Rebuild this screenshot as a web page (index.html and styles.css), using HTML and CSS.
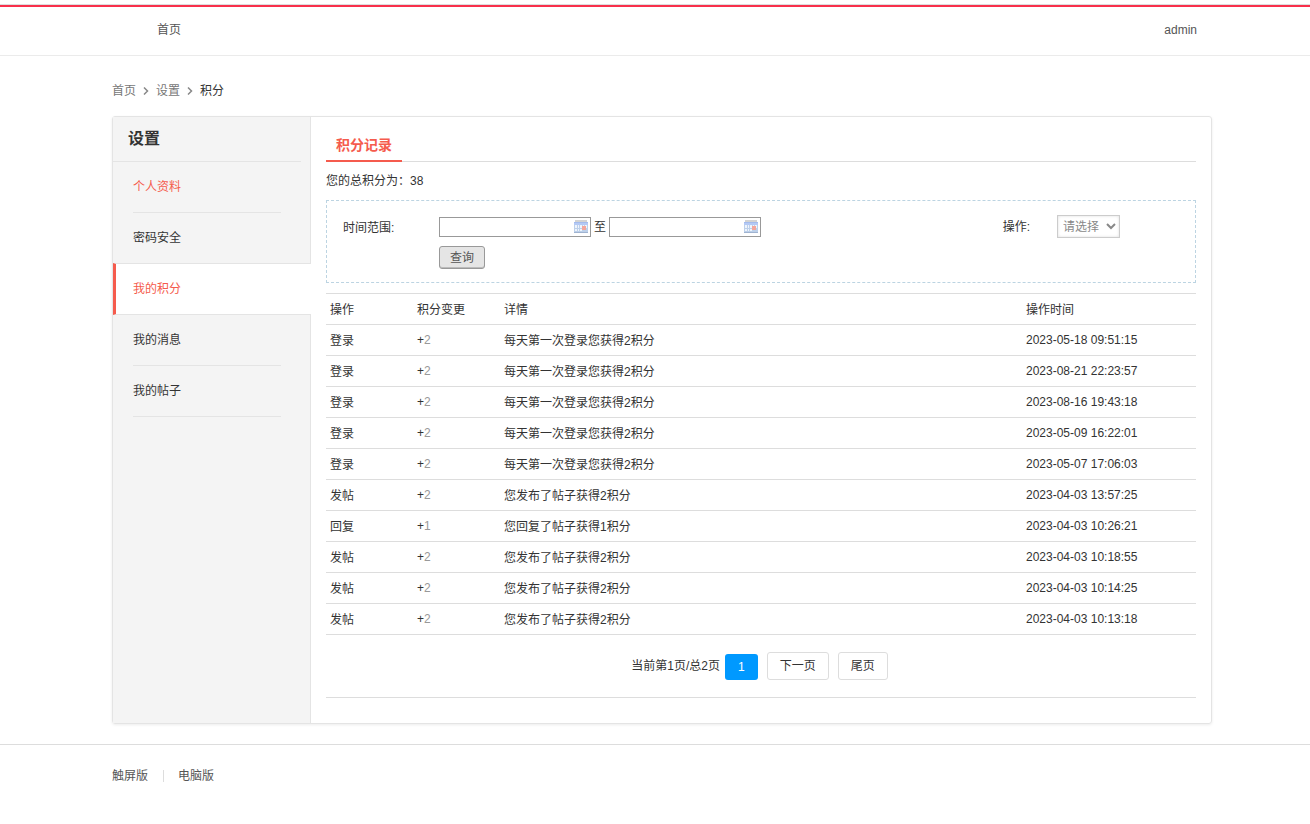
FILE: index.html
```html
<!DOCTYPE html>
<html lang="zh-CN">
<head>
  <meta charset="UTF-8">
  <meta name="viewport" content="width=device-width, initial-scale=1.0">
  <title>积分</title>
  <link rel="stylesheet" href="styles.css">
</head>
<body>
  <header class="header">
    <nav class="header-inner">
      <a href="#">首页</a>
      <a href="#">admin</a>
    </nav>
  </header>

  <div class="wrap">
    <nav class="crumbs">
      <a href="#">首页</a>
      <svg width="6" height="8" viewBox="0 0 6 8"><path d="M1 .5L4.5 4L1 7.5" /></svg>
      <a href="#">设置</a>
      <svg width="6" height="8" viewBox="0 0 6 8"><path d="M1 .5L4.5 4L1 7.5" /></svg>
      <span>积分</span>
    </nav>

    <div class="panel">
      <aside class="sidebar">
        <h1>设置</h1>
        <ul class="menu">
          <li><a href="#" class="visited">个人资料</a></li>
          <li><a href="#">密码安全</a></li>
          <li class="active"><a href="#">我的积分</a></li>
          <li><a href="#">我的消息</a></li>
          <li><a href="#">我的帖子</a></li>
        </ul>
      </aside>

      <main class="content">
        <div class="tabs">
          <h2>积分记录</h2>
        </div>
        <p class="total">您的总积分为：38</p>

        <form class="search">
          <label class="range-label" for="start">时间范围:</label>
          <div class="range">
            <div class="range-row">
              <span class="date-box">
                <input type="text" id="start">
                <svg width="14" height="14" viewBox="0 0 14 14">
                  <path fill="#d3d3d3" d="M1 0h12v2H1z" />
                  <path fill="#a3bbed" d="M0 2h14v1H0z" />
                  <path fill="#b4c9f4" d="M0 3h14v2H0z" />
                  <path fill="#bdd0ea" d="M0 5h14v8H0z" />
                  <path fill="#eef4fc" d="M1 5h2v3H1zM4 5h1v3H4zM6 5h2v3H6zM9 5h1v3H9zM11 5h2v3h-2zM1 9h2v2H1zM4 9h1v2H4zM6 9h2v2H6z" />
                  <path fill="#f3a69b" d="M8 6h4v4H8z" />
                  <path fill="#9fb3d0" d="M0 12h14v1H0z" />
                </svg>
              </span>
              <label for="end">至</label>
              <span class="date-box">
                <input type="text" id="end">
                <svg width="14" height="14" viewBox="0 0 14 14">
                  <path fill="#d3d3d3" d="M1 0h12v2H1z" />
                  <path fill="#a3bbed" d="M0 2h14v1H0z" />
                  <path fill="#b4c9f4" d="M0 3h14v2H0z" />
                  <path fill="#bdd0ea" d="M0 5h14v8H0z" />
                  <path fill="#eef4fc" d="M1 5h2v3H1zM4 5h1v3H4zM6 5h2v3H6zM9 5h1v3H9zM11 5h2v3h-2zM1 9h2v2H1zM4 9h1v2H4zM6 9h2v2H6z" />
                  <path fill="#f3a69b" d="M8 6h4v4H8z" />
                  <path fill="#9fb3d0" d="M0 12h14v1H0z" />
                </svg>
              </span>
            </div>
            <button type="submit" class="search-button">查询</button>
          </div>
          <div class="action">
            <label for="action">操作:</label>
            <select id="action">
              <option>请选择</option>
            </select>
          </div>
        </form>

        <table class="records">
          <thead>
            <tr><th class="narrow">操作</th><th class="narrow">积分变更</th><th class="wide">详情</th><th>操作时间</th></tr>
          </thead>
          <tbody>
            <tr><td>登录</td><td>+<span>2</span></td><td>每天第一次登录您获得2积分</td><td>2023-05-18 09:51:15</td></tr>
            <tr><td>登录</td><td>+<span>2</span></td><td>每天第一次登录您获得2积分</td><td>2023-08-21 22:23:57</td></tr>
            <tr><td>登录</td><td>+<span>2</span></td><td>每天第一次登录您获得2积分</td><td>2023-08-16 19:43:18</td></tr>
            <tr><td>登录</td><td>+<span>2</span></td><td>每天第一次登录您获得2积分</td><td>2023-05-09 16:22:01</td></tr>
            <tr><td>登录</td><td>+<span>2</span></td><td>每天第一次登录您获得2积分</td><td>2023-05-07 17:06:03</td></tr>
            <tr><td>发帖</td><td>+<span>2</span></td><td>您发布了帖子获得2积分</td><td>2023-04-03 13:57:25</td></tr>
            <tr><td>回复</td><td>+<span>1</span></td><td>您回复了帖子获得1积分</td><td>2023-04-03 10:26:21</td></tr>
            <tr><td>发帖</td><td>+<span>2</span></td><td>您发布了帖子获得2积分</td><td>2023-04-03 10:18:55</td></tr>
            <tr><td>发帖</td><td>+<span>2</span></td><td>您发布了帖子获得2积分</td><td>2023-04-03 10:14:25</td></tr>
            <tr><td>发帖</td><td>+<span>2</span></td><td>您发布了帖子获得2积分</td><td>2023-04-03 10:13:18</td></tr>
          </tbody>
        </table>

        <nav class="pages">
          <span class="page-info">当前第1页/总2页</span>
          <a href="#" class="current">1</a>
          <a href="#">下一页</a>
          <a href="#">尾页</a>
        </nav>
      </main>
    </div>
  </div>

  <footer class="footer">
    <a href="#">触屏版</a>
    <a href="#">电脑版</a>
  </footer>
</body>
</html>
```
FILE: styles.css
```css
* {
  box-sizing: border-box;
}

body {
  margin: 0;
  background: #fff;
  color: #333;
  font-family: "Liberation Sans", "Noto Sans CJK SC", sans-serif;
  font-size: 12px;
  line-height: 20px;
}

a {
  color: inherit;
  text-decoration: none;
}

h1, h2, p, ul {
  margin: 0;
  padding: 0;
}

input, select, button {
  font: inherit;
}

/* header */
.header {
  margin-top: 4px;
  border-top: 1px solid #ddd;
  border-bottom: 1px solid #ebebeb;
}

.header-inner {
  display: flex;
  justify-content: space-between;
  padding: 13px 113px 15px 157px;
  border-top: 2px solid #f8304b;
  color: #555;
}

.wrap {
  padding: 0 98px 0 112px;
}

.crumbs {
  display: flex;
  align-items: center;
  gap: 7px;
  padding: 25px 0 15px;
  color: #777;
}

.crumbs span {
  color: #333;
}

.crumbs svg {
  fill: none;
  stroke: #888;
  stroke-width: 1.5;
}

/* panel */
.panel {
  display: flex;
  border: 1px solid #e4e4e4;
  border-radius: 3px;
  box-shadow: 0 1px 3px rgba(0, 0, 0, 0.08);
}

.sidebar {
  width: 198px;
  flex-shrink: 0;
  background: #f4f4f4;
  box-shadow: inset -1px 0 #e4e4e4;
}

.sidebar h1 {
  margin-right: 10px;
  padding: 10px 15px;
  border-bottom: 1px solid #e4e4e4;
  font-size: 16px;
  line-height: 24px;
}

.menu {
  list-style: none;
}

.menu a {
  display: block;
  margin: 0 30px 0 20px;
  padding: 15px 0;
  border-bottom: 1px solid #e4e4e4;
}

.menu .visited,
.menu .active a {
  color: #f55b4d;
}

.menu .active {
  margin-top: -1px;
  border-top: 1px solid #e4e4e4;
  border-bottom: 1px solid #e4e4e4;
  border-left: 3px solid #f55b4d;
  background: #fff;
}

.menu .active a {
  margin-left: 17px;
  border-bottom: 0;
}

.content {
  flex: 1;
  padding: 14px 15px 25px;
}

.tabs {
  display: flex;
  border-bottom: 1px solid #ddd;
}

.tabs h2 {
  margin-bottom: -1px;
  padding: 4px 10px 5px;
  border-bottom: 2px solid #f55b4d;
  color: #f55b4d;
  font-size: 14px;
}

.total {
  padding: 9px 0;
}

/* search form */
.search {
  display: flex;
  align-items: flex-start;
  padding: 14px 75px 13px 16px;
  border: 1px dashed #bcd4e2;
}

.range-label {
  width: 96px;
  padding-top: 3px;
}

.range-row {
  display: flex;
  align-items: center;
  gap: 3px;
  padding: 2px 0;
}

.date-box {
  display: flex;
  align-items: center;
  width: 152px;
  height: 20px;
  padding-right: 2px;
  border: 1px solid #999;
}

.date-box input {
  flex: 1;
  min-width: 0;
  height: 18px;
  border: 0;
  outline: none;
}

.search-button {
  height: 23px;
  margin-top: 7px;
  padding: 0 10px;
  border: 1px solid #999;
  border-radius: 3px;
  background: #e5e5e5;
  box-shadow: inset 0 -1px #bbb;
  color: #555;
}

.action {
  display: flex;
  align-items: center;
  gap: 27px;
  margin-left: auto;
}

.action select {
  width: 63px;
  height: 23px;
  padding: 0 1px;
  border: 1px solid #ccc;
  border-radius: 0;
  background: #fff;
  box-shadow: inset 0 0 3px #ddd;
  color: #888;
}

/* records */
.records {
  width: 100%;
  margin-top: 10px;
  border-collapse: collapse;
  border-top: 1px solid #ddd;
}

.records th,
.records td {
  height: 31px;
  padding: 6px 4px 4px;
  border-bottom: 1px solid #ddd;
  font-weight: normal;
  text-align: left;
}

.records td:nth-child(even) {
  padding: 5px 4px;
}

.records .narrow {
  width: 10%;
}

.records .wide {
  width: 60%;
}

.records td span {
  color: #999;
}

.pages {
  display: flex;
  justify-content: center;
  align-items: flex-end;
  gap: 9px;
  padding: 17px 3px 17px 0;
  border-bottom: 1px solid #ddd;
}

.page-info {
  margin-right: -4px;
  padding: 4px 0;
}

.pages a {
  padding: 3px 12px;
  border: 1px solid #ddd;
  border-radius: 3px;
}

.pages .current {
  padding: 3px 13px;
  border-width: 0;
  background: #0099ff;
  color: #fff;
}

/* footer */
.footer {
  display: flex;
  margin-top: 20px;
  padding: 21px 112px 0;
  border-top: 1px solid #ddd;
  color: #555;
}

.footer a + a {
  margin-left: 15px;
  padding-left: 15px;
  background: linear-gradient(#ddd, #ddd) left center / 1px 12px no-repeat;
}
```
